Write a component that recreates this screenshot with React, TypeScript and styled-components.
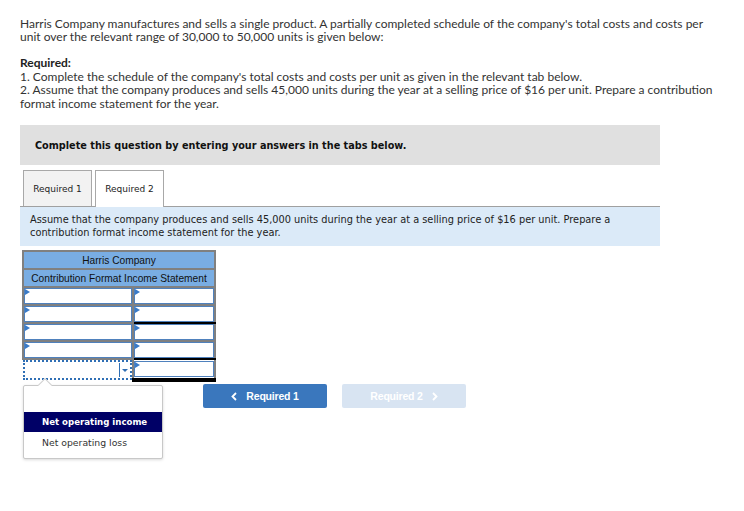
import React from 'react';
import styled, { createGlobalStyle } from 'styled-components';

const GlobalStyle = createGlobalStyle`
  html, body {
    margin: 0;
    padding: 0;
    background: #fff;
  }
  body {
    font-family: Lato, "Liberation Sans", sans-serif;
    color: #333;
  }
`;

const Page = styled.div`
  width: 744px;
  height: 511px;
  padding: 17px 20px 0 20px;
  box-sizing: border-box;
  overflow: hidden;
`;

const Intro = styled.p`
  margin: 0;
  width: 700px;
  font-size: 12px;
  line-height: 13px;
  color: #333;
`;

const ReqBlock = styled.div`
  margin-top: 13px;
  width: 700px;
  font-size: 12px;
  line-height: 13.5px;
  color: #333;

  strong {
    font-weight: 700;
    color: #222;
  }
`;

const Banner = styled.div`
  margin-top: 15px;
  width: 640px;
  height: 40px;
  background: #e0e0e0;
  display: flex;
  align-items: center;
  padding-left: 15px;
  box-sizing: border-box;
  font-family: Verdana, "DejaVu Sans", sans-serif;
  font-weight: 700;
  font-size: 9.7px;
  color: #111;
`;

const TabBar = styled.div`
  display: flex;
  margin-top: 5px;
  padding-left: 3px;
  gap: 3px;
  width: 640px;
  box-sizing: border-box;
  border-bottom: 1px solid #a0a0a0;
`;

const Tab = styled.div<{ active?: boolean }>`
  width: 69px;
  box-sizing: border-box;
  display: flex;
  align-items: center;
  justify-content: center;
  font-family: Verdana, "DejaVu Sans", sans-serif;
  font-size: 9px;
  color: #222;
  border: 1px solid #a8a8a8;
  border-bottom: none;
  background: ${p => (p.active ? '#fff' : '#f2f2f2')};
  margin-bottom: ${p => (p.active ? '-1px' : '0')};
  height: ${p => (p.active ? '37px' : '36px')};
`;

const Prompt = styled.div`
  width: 640px;
  box-sizing: border-box;
  background: #dbeaf8;
  padding: 7px 10px 7px 10px;
  font-family: Verdana, "DejaVu Sans", sans-serif;
  font-size: 9.8px;
  line-height: 12.5px;
  color: #222;
`;

const Sheet = styled.div`
  margin-top: 4px;
  margin-left: 2px;
  position: relative;
  width: 192px;
`;

const Grid = styled.table`
  border-collapse: collapse;
  width: 192px;
  table-layout: fixed;
  font-family: "Liberation Sans", Arial, sans-serif;
  font-size: 10.2px;
`;

const HeadCell = styled.td`
  background: #79ade3;
  border: 2px solid #808080;
  height: 14px;
  padding: 1px 0;
  text-align: center;
  color: #111;
  white-space: nowrap;
`;

const Cell = styled.td<{ thick?: boolean; last?: boolean }>`
  border: 2px solid #808080;
  border-bottom: ${p => (p.thick ? '2px solid #000' : '2px solid #808080')};
  ${p => p.last && 'border-bottom: 4px solid #000;'}
  padding: 0;
  position: relative;
  background: #fff;
`;

const Field = styled.div`
  border: 1px solid #4f81bd;
  box-sizing: border-box;
  height: 16px;
  position: relative;
  background: #fff;
`;

const Flag = styled.span`
  position: absolute;
  left: 0;
  top: 0;
  width: 0;
  height: 0;
  border-top: 3px solid transparent;
  border-bottom: 3px solid transparent;
  border-left: 5px solid #3a7bc8;
`;

const SelectCell = styled.td`
  padding: 0;
  border: none;
  background: #fff;
`;

const Select = styled.div`
  border: 2px dotted #2f6fb5;
  box-sizing: border-box;
  display: flex;
  justify-content: flex-end;
  align-items: stretch;
  height: 20px;
  padding: 1px 0;
`;

const Arrow = styled.div`
  width: 10px;
  border-left: 1px solid #2f6fb5;
  display: flex;
  align-items: center;
  justify-content: center;

  &::after {
    content: '';
    border-left: 3px solid transparent;
    border-right: 3px solid transparent;
    border-top: 3px solid #2f6fb5;
  }
`;

const Popup = styled.div`
  position: absolute;
  left: 1px;
  top: 135px;
  width: 140px;
  height: 74px;
  background: #fff;
  border: 1px solid #c8c8c8;
  border-radius: 2px;
  box-shadow: 0 1px 3px rgba(0, 0, 0, 0.15);
  padding-top: 26px;
  box-sizing: border-box;
  font-family: Verdana, "DejaVu Sans", sans-serif;

  &::before {
    content: '';
    position: absolute;
    top: -6px;
    left: 16px;
    width: 9px;
    height: 9px;
    background: #fff;
    border-left: 1px solid #d0d0d0;
    border-top: 1px solid #d0d0d0;
    transform: rotate(45deg);
  }
`;

const Option = styled.div<{ selected?: boolean }>`
  height: 20px;
  display: flex;
  align-items: center;
  padding-left: 18px;
  background: ${p => (p.selected ? '#000066' : 'transparent')};
  color: ${p => (p.selected ? '#fff' : '#333')};
  font-weight: ${p => (p.selected ? 700 : 400)};
  font-size: ${p => (p.selected ? '8.6px' : '9.3px')};
`;

const Lower = styled.div`
  display: flex;
  align-items: flex-start;
`;

const NavRow = styled.div`
  display: flex;
  gap: 15px;
  margin-left: -11px;
  margin-top: 138px;
`;

const NavButton = styled.div<{ disabled?: boolean }>`
  width: 124px;
  height: 24px;
  border-radius: 2px;
  background: ${p => (p.disabled ? '#d8e4f2' : '#3a77bd')};
  color: #fff;
  display: flex;
  align-items: center;
  justify-content: center;
  gap: 9px;
  font-family: "Liberation Sans", Arial, sans-serif;
  font-weight: 700;
  font-size: 10.5px;
  letter-spacing: -0.2px;
`;

const Chevron = ({ dir }: { dir: 'left' | 'right' }) => (
  <svg width="6" height="9" viewBox="0 0 6 9">
    <path
      d={dir === 'left' ? 'M5 1 L1.5 4.5 L5 8' : 'M1 1 L4.5 4.5 L1 8'}
      fill="none"
      stroke="#fff"
      strokeWidth="1.8"
    />
  </svg>
);

const rows = [
  { thick: false },
  { thick: true },
  { thick: false },
  { thick: true },
];

export default function App() {
  return (
    <>
      <GlobalStyle />
      <Page>
        <Intro>
          Harris Company manufactures and sells a single product. A partially completed schedule of the company's total costs and costs per unit over the relevant range of 30,000 to 50,000 units is given below:
        </Intro>
        <ReqBlock>
          <strong>Required:</strong>
          <br />
          1. Complete the schedule of the company's total costs and costs per unit as given in the relevant tab below.
          <br />
          2. Assume that the company produces and sells 45,000 units during the year at a selling price of $16 per unit. Prepare a contribution format income statement for the year.
        </ReqBlock>
        <Banner>Complete this question by entering your answers in the tabs below.</Banner>
        <TabBar>
          <Tab>Required 1</Tab>
          <Tab active>Required 2</Tab>
        </TabBar>
        <Prompt>
          Assume that the company produces and sells 45,000 units during the year at a selling price of $16 per unit. Prepare a contribution format income statement for the year.
        </Prompt>
        <Lower>
          <Sheet>
            <Grid>
              <colgroup>
                <col style={{ width: 110 }} />
                <col style={{ width: 82 }} />
              </colgroup>
              <tbody>
                <tr>
                  <HeadCell colSpan={2}>Harris Company</HeadCell>
                </tr>
                <tr>
                  <HeadCell colSpan={2}>Contribution Format Income Statement</HeadCell>
                </tr>
                {rows.map((r, i) => (
                  <tr key={i}>
                    <Cell>
                      <Field>
                        <Flag />
                      </Field>
                    </Cell>
                    <Cell thick={r.thick}>
                      <Field>
                        <Flag />
                      </Field>
                    </Cell>
                  </tr>
                ))}
                <tr>
                  <SelectCell>
                    <Select>
                      <Arrow />
                    </Select>
                  </SelectCell>
                  <Cell last>
                    <Field>
                      <Flag />
                    </Field>
                  </Cell>
                </tr>
              </tbody>
            </Grid>
            <Popup>
              <Option selected>Net operating income</Option>
              <Option>Net operating loss</Option>
            </Popup>
          </Sheet>
          <NavRow>
            <NavButton>
              <Chevron dir="left" />
              Required 1
            </NavButton>
            <NavButton disabled>
              Required 2
              <Chevron dir="right" />
            </NavButton>
          </NavRow>
        </Lower>
      </Page>
    </>
  );
}
